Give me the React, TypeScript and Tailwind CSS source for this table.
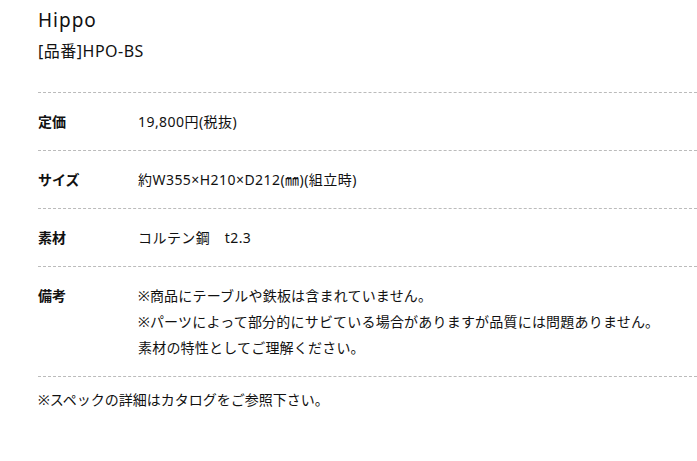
import React from "react";

const font = {
  fontFamily: '"Noto Sans", "Noto Sans CJK JP", sans-serif',
};

const specs: { label: string; lines: string[]; wide?: boolean }[] = [
  { label: "定価", lines: ["19,800円(税抜)"], wide: true },
  { label: "サイズ", lines: ["約W355×H210×D212(㎜)(組立時)"], wide: true },
  { label: "素材", lines: ["コルテン鋼　t2.3"], wide: true },
  {
    label: "備考",
    lines: [
      "※商品にテーブルや鉄板は含まれていません。",
      "※パーツによって部分的にサビている場合がありますが品質には問題ありません。",
      "素材の特性としてご理解ください。",
    ],
  },
];

export default function App() {
  return (
    <div className="min-h-[461px] w-[697px] bg-white text-[#111]" style={font}>
      <div className="pl-[38px] pt-[6px]">
        <h1 className="text-[19px] leading-[28px] tracking-[1px]">Hippo</h1>
        <p className="mt-[6px] text-[16px] leading-[22px] tracking-[0.5px]">[品番]HPO-BS</p>
        <div className="mt-[30px] border-t border-dashed border-[#bbb]">
          {specs.map((s) => (
            <div
              key={s.label}
              className="flex border-b border-dashed border-[#bbb] pt-4 pb-[15px] text-[14px] leading-[26px]"
            >
              <div className="w-[100px] shrink-0 font-bold">{s.label}</div>
              <div className={s.wide ? "tracking-[0.45px]" : "tracking-[0.2px]"}>
                {s.lines.map((l) => (
                  <div key={l}>{l}</div>
                ))}
              </div>
            </div>
          ))}
        </div>
        <p className="pt-[10px] text-[14px] leading-[26px]">
          ※スペックの詳細はカタログをご参照下さい。
        </p>
      </div>
    </div>
  );
}
